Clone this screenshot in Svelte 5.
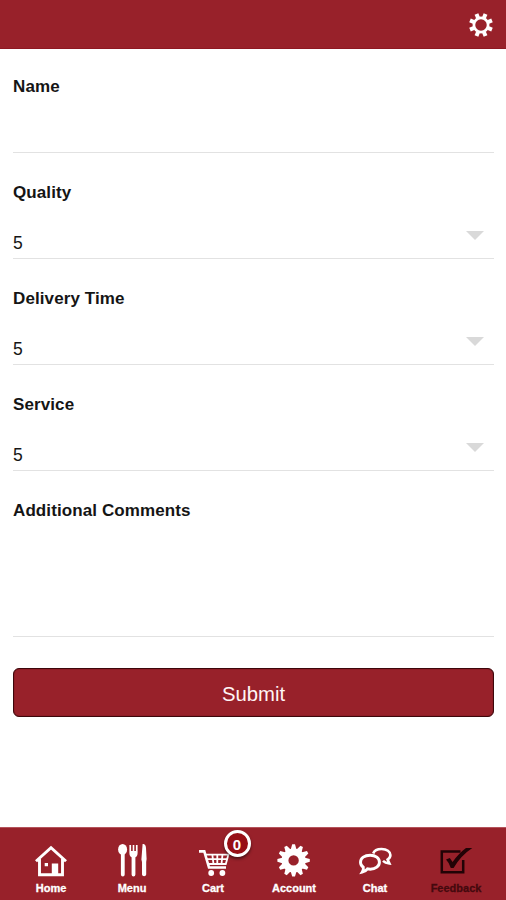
<script lang="ts">
  type Field = { id: string; label: string; kind: "text" | "select" | "area"; value: string };

  const fields: Field[] = [
    { id: "name", label: "Name", kind: "text", value: "" },
    { id: "quality", label: "Quality", kind: "select", value: "5" },
    { id: "delivery", label: "Delivery Time", kind: "select", value: "5" },
    { id: "service", label: "Service", kind: "select", value: "5" },
    { id: "comments", label: "Additional Comments", kind: "area", value: "" },
  ];

  const tabs = ["Home", "Menu", "Cart", "Account", "Chat", "Feedback"];
  let active = $state("Feedback");
  let cartCount = $state(0);

  const spread = (n: number, offset = 0) =>
    Array.from({ length: n }, (_, i) => offset + (i * 360) / n);
</script>

<div class="app">
  <header>
    <button class="settings" aria-label="Settings">
      <svg viewBox="-12 -12 24 24" width="24" height="24">
        {#each spread(8, 22.5) as deg}
          <path d="M-2-7.5V-11.9H2V-7.5Z" fill="#fff" transform="rotate({deg})" />
        {/each}
        <circle r="7.1" fill="none" stroke="#fff" stroke-width="2.7" />
      </svg>
    </button>
  </header>

  <main>
    {#each fields as field (field.id)}
      <div class="field {field.kind}">
        <span class="label">{field.label}</span>
        <div class="value">
          <span>{field.value}</span>
          {#if field.kind === "select"}
            <svg class="arrow" viewBox="0 0 18 9" width="18" height="9">
              <path d="M0 0H18L9 9Z" fill="#d9d9d9" />
            </svg>
          {/if}
        </div>
      </div>
    {/each}
    <button class="submit">Submit</button>
  </main>

  <nav>
    {#each tabs as tab}
      <button class="tab" class:active={tab === active} onclick={() => (active = tab)}>
        <svg viewBox="0 0 36 36" width="36" height="36">
          {#if tab === "Home"}
            <path d="M3 19.3L18 5.6L33 19.3M6.5 17V32.8H29.5V17" fill="none" stroke="currentColor" stroke-width="2.9" />
            <path d="M18.8 21.5H25.2V32H18.8ZM11.7 21H15V24.3H11.7Z" fill="currentColor" />
          {:else if tab === "Menu"}
            <ellipse cx="8.6" cy="7.4" rx="4.5" ry="5.5" fill="currentColor" />
            <path d="M8.8 10V32.5M19.5 14V32.5" stroke="currentColor" stroke-width="3.8" stroke-linecap="round" />
            <path d="M15.4 3V11Q15.4 15.5 19.5 15.5T23.6 11V3H21.9V9H20.3V3H18.7V9H17.1V3Z" fill="currentColor" />
            <path d="M28.6 2H29.6Q31.8 2.6 32 6L32.6 17L32.2 20V32.5Q32 34.3 30.1 34.3T28 32.5V20L27.4 17.5Z" fill="currentColor" />
          {:else if tab === "Cart"}
            <path d="M4 9.4H9.3L14 25.5H31" fill="none" stroke="currentColor" stroke-width="2.6" />
            <path d="M10 12.6H33.4L30.8 22H13M11.6 17.2H32M17.3 12.3L18.5 22M22.3 12.3V22M27.5 12.3L26.5 22" fill="none" stroke="currentColor" stroke-width="1.8" />
            <circle cx="16.2" cy="31" r="2.9" fill="currentColor" />
            <circle cx="27.4" cy="31" r="2.9" fill="currentColor" />
          {:else if tab === "Account"}
            <g transform="translate(17.6 18.4)">
              {#each spread(12) as deg}
                <path d="M-3-10.5L-1.4-16.2H1.4L3-10.5Z" fill="currentColor" transform="rotate({deg})" />
              {/each}
              <circle r="8.6" fill="none" stroke="currentColor" stroke-width="6.8" />
            </g>
          {:else if tab === "Chat"}
            <path d="M16.2 11.5C17.2 8.6 20.2 7 24.6 7C29.8 7 33.4 9.6 33.4 13.1C33.4 15 32.2 16.6 30.6 17.6L32.4 21.4C29.5 21.1 27.4 20.2 26 18.8" fill="none" stroke="currentColor" stroke-width="2.6" />
            <path d="M13.2 13.2C18.6 13.2 22.4 16.2 22.4 20.2S18.6 27.2 13.2 27.2L10.5 26.9Q8.5 29.5 5.2 30.2Q6.8 27.6 6.3 25.2Q3.5 23.2 3.5 20.2C3.5 16.2 7.5 13.2 13.2 13.2Z" fill="none" stroke="currentColor" stroke-width="2.9" />
          {:else}
            <path d="M22.5 9.6H3.8V30.2H25.2V18" fill="none" stroke="currentColor" stroke-width="2.5" />
            <path d="M8 17.4L11.8 16L14.6 20Q20.5 11.5 28 6L34.3 6Q22.8 13.5 15.6 26H12.8Q11.5 21 8 17.4Z" fill="currentColor" />
          {/if}
        </svg>
        <span class="caption">{tab}</span>
        {#if tab === "Cart"}
          <span class="badge">{cartCount}</span>
        {/if}
      </button>
    {/each}
  </nav>
</div>

<style>
  :global(body) {
    background: #fff;
  }
  .app {
    display: flex;
    flex-direction: column;
    height: 900px;
    overflow: hidden;
    font-family: "Liberation Sans", Arial, sans-serif;
    color: #151515;
  }
  button {
    margin: 0;
    padding: 0;
    border: 0;
    background: none;
    font: inherit;
    color: inherit;
  }
  svg {
    display: block;
  }
  header {
    box-sizing: border-box;
    flex: none;
    display: flex;
    align-items: center;
    justify-content: flex-end;
    height: 49px;
    padding: 1px 13px 0 0;
    background: #98212a;
    border-bottom: 1px solid #8e1822;
  }
  main {
    flex: 1;
    display: flex;
    flex-direction: column;
    padding: 0 12px 0 13px;
  }
  .field {
    box-sizing: border-box;
    display: flex;
    flex-direction: column;
    height: 106px;
    padding-top: 30px;
    border-bottom: 1px solid #e2e2e2;
  }
  .field.text {
    height: 104px;
    padding-top: 28px;
  }
  .field.area {
    height: 166px;
  }
  .label {
    font-size: 17px;
    line-height: 20px;
    font-weight: bold;
    letter-spacing: 0.1px;
  }
  .value {
    flex: 1;
    display: flex;
    align-items: flex-end;
    justify-content: space-between;
    padding: 0 10px 5px 0;
    font-size: 17.5px;
    line-height: 20px;
  }
  .arrow {
    margin-bottom: 13px;
  }
  .submit {
    box-sizing: border-box;
    height: 49px;
    margin-top: 31px;
    padding-top: 3px;
    border: 1px solid #3d070b;
    border-radius: 6px;
    background: #98212a;
    box-shadow: inset 0 0 1px #3d070b;
    color: #fff5f5;
    font-size: 20.3px;
  }
  nav {
    box-sizing: border-box;
    flex: none;
    display: flex;
    height: 73px;
    padding: 0 9.5px 0 10.5px;
    border-top: 1px solid #b4535b;
    background: #98212a;
  }
  .tab {
    position: relative;
    flex: 1;
    display: flex;
    flex-direction: column;
    align-items: center;
    padding-top: 14px;
    color: #fff;
  }
  .tab.active {
    color: #210306;
  }
  .caption {
    margin-top: 4px;
    font-size: 11px;
    line-height: 13px;
    font-weight: bold;
    -webkit-text-stroke: 0.3px currentColor;
  }
  .active .caption {
    color: #45090e;
  }
  .badge {
    position: absolute;
    top: 2px;
    left: 51px;
    box-sizing: border-box;
    width: 27px;
    height: 27px;
    border: 3px solid #fff;
    border-radius: 50%;
    background: #970f16;
    box-shadow: 0 2px 3px rgba(0, 0, 0, 0.5);
    font-size: 15px;
    line-height: 23px;
    font-weight: bold;
    text-align: center;
  }
</style>
